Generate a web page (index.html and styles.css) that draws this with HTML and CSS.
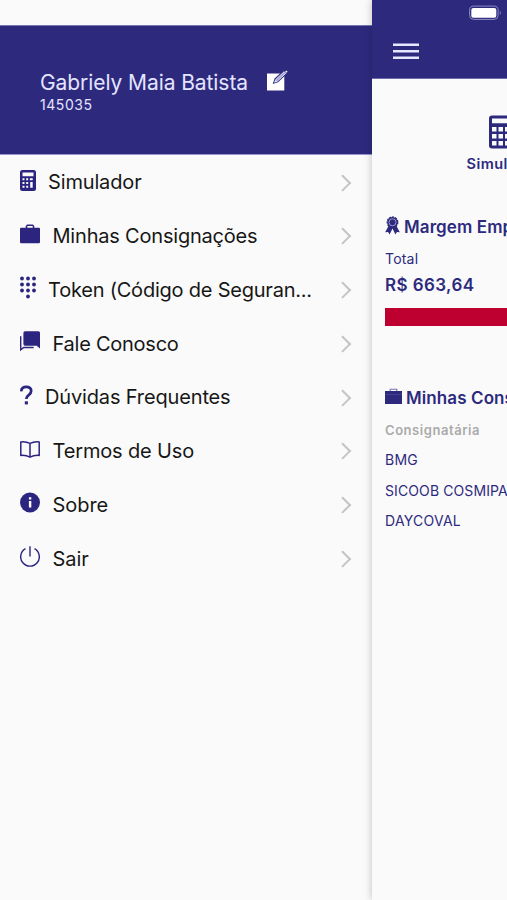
FILE: index.html
```html
<!DOCTYPE html>
<html lang="pt-BR">
<head>
<meta charset="utf-8">
<title>Consignações</title>
<link rel="stylesheet" href="styles.css">
</head>
<body>
<div class="app">
  <aside class="drawer">
    <header class="profile">
      <div class="profile-line">
        <span class="name">Gabriely Maia Batista</span>
        <svg class="edit" width="21" height="21" viewBox="0 0 21 21"><path d="M0 3.500h17.300V20.500H0z" fill="#fff"/><path d="M7.500 12.200l1-3L17.300 1l2 2-8.800 8.200z" fill="#fff" stroke="#2d2a7e" stroke-width="2.200"/><path d="M7.700 12.200l1-2.600L17.200 1.700l1.600 1.600-8.500 7.900z" fill="#a5a3d0" stroke="#e4e4ff" stroke-width="1"/><path d="M18.200 1.300l1-.9 1.400 1.400-1 .9z" fill="#fff"/></svg>
      </div>
      <span class="code">145035</span>
    </header>
    <nav class="menu">
      <a class="item"><svg class="w16" viewBox="0 0 16 21"><rect width="16" height="21" rx="2.5" fill="currentColor"/><path d="M2.5 2.500h11v3.800h-11zM2.500 8.200h2v2h-2zM6.200 8.200h2v2h-2zM9.900 8.200h2.800v2H9.900zM2.500 12h2v2h-2zM6.200 12h2v2h-2zM2.500 15.800h2v2h-2zM6.200 15.800h2v2h-2zM10.200 12h2.500v5.800h-2.500z" fill="#fafafa"/></svg><span class="t1">Simulador</span><i class="chev"></i></a>
      <a class="item"><svg class="w20" viewBox="0 0 20 21"><path d="M0 4.700q0-1 1-1h4.700V2.100L7.100.600h5.800l1.400 1.500v1.600H19q1 0 1 1V18q0 1.200-1.200 1.200H1.200Q0 19.200 0 18zM7.300 3.700h5.400V2H7.300z" fill="currentColor" fill-rule="evenodd"/></svg><span class="t2">Minhas Consignações</span><i class="chev"></i></a>
      <a class="item"><svg class="w16 dots" viewBox="0 0 16 23"><g fill="currentColor"><circle cx="2" cy="2.500" r="1.900"/><circle cx="8" cy="2.500" r="1.900"/><circle cx="14" cy="2.500" r="1.900"/><circle cx="2" cy="8.500" r="1.900"/><circle cx="8" cy="8.500" r="1.900"/><circle cx="14" cy="8.500" r="1.900"/><circle cx="2" cy="14.500" r="1.900"/><circle cx="8" cy="14.500" r="1.900"/><circle cx="14" cy="14.500" r="1.900"/><circle cx="8" cy="20.500" r="1.900"/></g></svg><span class="t3">Token (Código de Seguran...</span><i class="chev"></i></a>
      <a class="item"><svg class="w20" viewBox="0 0 20 21"><path d="M5 .300h13.500Q20 .300 20 1.800v15.600l-3.300-2.700H5q-1.600 0-1.600-1.600V1.900Q3.400.300 5 .300z" fill="currentColor"/><path d="M.700 5.200v13.700l3-2.400h10" fill="none" stroke="currentColor" stroke-width="1.400"/></svg><span class="t4">Fale Conosco</span><i class="chev"></i></a>
      <a class="item"><svg class="w13" viewBox="0 0 13 21"><path d="M1.200 6.300Q1.600 1.900 6.200 1.900q5 0 5 4.200 0 2-2.300 3.700-2.600 1.800-2.600 4.300" fill="none" stroke="currentColor" stroke-width="2.700"/><rect x="4.800" y="16.300" width="3.100" height="3.100" fill="currentColor"/></svg><span class="t5">Dúvidas Frequentes</span><i class="chev"></i></a>
      <a class="item"><svg class="w20 book" viewBox="0 0 20 21"><path d="M10 3.400Q6 1.400.800 1.900v13.500q5.200-.400 9.200 1.800 4-2.200 9.200-1.800V1.900Q14 1.400 10 3.400zv13.800" fill="none" stroke="currentColor" stroke-width="1.500" stroke-linejoin="round"/></svg><span class="t6">Termos de Uso</span><i class="chev"></i></a>
      <a class="item"><svg class="w20" viewBox="0 0 20 21"><circle cx="10" cy="10.500" r="10" fill="currentColor"/><path d="M8.900 5.300h2.400v2.200H8.900zM8.900 8.900h2.400v6.700H8.900z" fill="#fff"/></svg><span class="t7">Sobre</span><i class="chev"></i></a>
      <a class="item"><svg class="w20 power" viewBox="0 0 20 21"><path d="M5.500 2.700a9.300 9.300 0 1 0 9 0M10 .300v10.200" fill="none" stroke="currentColor" stroke-width="1.400"/></svg><span class="t8">Sair</span><i class="chev"></i></a>
    </nav>
  </aside>
  <main class="page">
    <header class="topbar">
      <svg class="battery" width="33" height="16" viewBox="0 0 33 16"><rect x=".600" y="1.100" width="28.500" height="13.300" rx="4" fill="none" stroke="#8e8cc0"/><rect x="2.300" y="2.900" width="25" height="9.800" rx="2" fill="#fff"/><path d="M30.800 5.500q2 2.300 0 4.600z" fill="#8e8cc0"/></svg>
      <svg class="burger" width="26" height="17" viewBox="0 0 26 17"><path d="M0 1.700h26M0 8.200h26M0 14.700h26" stroke="#e6e6ff" stroke-width="2.400"/></svg>
    </header>
    <div class="shortcut">
      <svg width="30" height="34" viewBox="0 0 30 34"><rect y=".500" width="30" height="33" rx="3" fill="currentColor"/><path d="M3 3.500h24v4.800H3zM3 12h4.500v4.500H3zM9.500 12H14v4.500H9.500zM16 12h4.500v4.500H16zM22.500 12H27v4.500h-4.500zM3 19h4.500v4.500H3zM9.500 19H14v4.500H9.500zM16 19h4.500v4.500H16zM3 26h4.500v4.500H3zM9.500 26H14v4.500H9.500zM16 26h4.500v4.500H16zM22.500 19H27v11.500h-4.500z" fill="#fafafa"/></svg>
      <b>Simulador</b>
    </div>
    <section class="margin">
      <h2><svg width="15" height="19" viewBox="0 0 15 19"><path d="M3.500 10L.200 16.300l2.900-.300 1.500 2.600 2.900-6 2.900 6 1.500-2.600 2.900.300L11.500 10z" fill="currentColor"/><circle cx="7.500" cy="6.300" r="5.300" fill="currentColor" stroke="currentColor" stroke-width="1.300" stroke-dasharray="2 1"/><circle cx="7.500" cy="6.300" r="3.500" fill="none" stroke="#a3a1cc" stroke-width=".900"/></svg><span>Margem Empréstimo</span></h2>
      <p class="total">Total</p>
      <p class="amount">R$ 663,64</p>
      <div class="bar"></div>
    </section>
    <section class="loans">
      <h2><svg width="17" height="17" viewBox="0 0 17 17"><path d="M5.200 3V1.200h6.600V3" fill="none" stroke="#7775ae" stroke-width="1.100"/><path d="M0 3h17v13H0z" fill="currentColor"/><path d="M0 6.500h17" stroke="#4c499a" stroke-width=".700"/></svg><span>Minhas Consignações</span></h2>
      <p class="head">Consignatária</p>
      <p class="r1">BMG</p>
      <p class="r2">SICOOB COSMIPA</p>
      <p class="r3">DAYCOVAL</p>
    </section>
  </main>
</div>
</body>
</html>
```
FILE: styles.css
```css
* { box-sizing: border-box; }
body { margin: 0; font-family: Inter, "Liberation Sans", sans-serif; background: #fafafa; color: #2d2a7e; }
.app { display: flex; width: 507px; height: 900px; overflow: hidden; }
.drawer { width: 372px; flex: none; padding-top: 25px; background: #fafafa; }
.profile { height: 130.4px; padding: 42px 0 0 40px; background: #2d2a7e; border-top: 1px solid #7875b0; border-bottom: 1px solid #9795cc; color: #e4e4ff; }
.profile-line { display: flex; align-items: center; height: 28px; }
.name { width: 227px; font-size: 21px; white-space: nowrap; letter-spacing: -.08px; }
.edit { margin-top: -3px; }
.code { display: block; font-size: 14px; line-height: 18px; letter-spacing: .55px; }
.item { display: flex; align-items: center; height: 53.75px; padding: 0 20px; color: #2b2580; }
.item svg { flex: none; height: 21px; margin-top: -4px; }
.item .w16 { width: 16px; margin-right: 12px; }
.item .dots { height: 23px; margin-top: -5px; }
.item .w20 { width: 20px; margin-right: 12.5px; }
.item .book { margin-top: -2px; }
.item .power { margin-top: -4px; }
.item .w13 { width: 13px; margin-right: 12px; }
.item span { flex: 1; font-size: 20px; line-height: 28px; white-space: nowrap; color: #171717; letter-spacing: -.15px; }
.item .t2 { letter-spacing: -.2px; }
.item .t3 { letter-spacing: -.22px; }
.item .t4 { letter-spacing: -.25px; }
.item .t7, .item .t8 { letter-spacing: -.05px; }
.chev { width: 11.5px; height: 11.5px; margin-right: 3.5px; border: solid #c4c4c6; border-width: 2px 2px 0 0; transform: rotate(45deg); flex: none; }
.page { width: 135px; flex: none; background: #fafafa; box-shadow: 0 0 8px rgba(0,0,0,.24); z-index: 1; border-left: 1px solid #fafafa; }
.topbar { height: 79px; margin-left: -1px; background: #2d2a7e; border-bottom: 1px solid #6d6aaa; padding: 5px 0 0 21px; }
.battery { display: block; margin-left: 76px; }
.burger { display: block; margin-top: 22px; }
.shortcut { width: 100px; height: 136px; margin-left: 81px; padding-top: 36px; display: flex; flex-direction: column; align-items: center; }
.shortcut b { font-size: 14.5px; line-height: 20px; margin-top: 5px; font-weight: 600; letter-spacing: .45px; }
section { padding-left: 12px; white-space: nowrap; }
h2, p { margin: 0; }
h2 { display: flex; align-items: center; height: 24px; font-size: 17px; font-weight: 600; letter-spacing: .1px; }
h2 svg { margin: -3px 4px 0 0; flex: none; }
.total { font-size: 14px; line-height: 20px; margin-top: 10px; letter-spacing: .2px; }
.amount { font-size: 17px; font-weight: 600; line-height: 24px; margin-top: 4px; letter-spacing: .4px; }
.bar { height: 18px; width: 160px; margin-top: 11px; background: #be0030; }
.loans { margin-top: 60px; }
.loans p { font-size: 14px; line-height: 30.5px; }
.loans .r1, .loans .r3 { letter-spacing: .25px; }
.loans .r2 { letter-spacing: .1px; }
.loans .head { font-size: 13px; font-weight: 600; color: #aaa; line-height: 20px; margin: 10px 0 5px; letter-spacing: .55px; }
```
